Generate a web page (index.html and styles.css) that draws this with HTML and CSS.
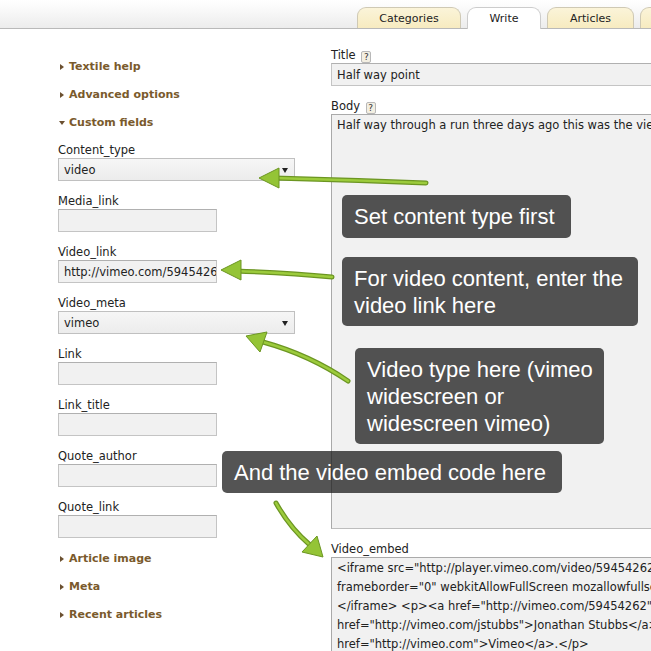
FILE: index.html
```html
<!DOCTYPE html>
<html lang="en">
<head>
<meta charset="utf-8">
<title>Write</title>
<link rel="stylesheet" href="styles.css">
</head>
<body>
<div class="page">
  <header class="topbar">
    <nav class="tabs">
      <span class="tab tab-cat">Categories</span>
      <span class="tab tab-write active">Write</span>
      <span class="tab tab-art">Articles</span>
      <span class="tab tab-more">Images</span>
    </nav>
  </header>

  <main class="layout">
    <aside class="side">
      <div class="toggle closed">Textile help</div>
      <div class="toggle closed">Advanced options</div>
      <div class="toggle open">Custom fields</div>

      <div class="fields">
        <div class="field">
          <label class="lbl">Content_type</label>
          <div class="select">video</div>
        </div>
        <div class="field">
          <label class="lbl">Media_link</label>
          <div class="input"></div>
        </div>
        <div class="field">
          <label class="lbl">Video_link</label>
          <div class="input">http://vimeo.com/59454262</div>
        </div>
        <div class="field">
          <label class="lbl">Video_meta</label>
          <div class="select">vimeo</div>
        </div>
        <div class="field">
          <label class="lbl">Link</label>
          <div class="input"></div>
        </div>
        <div class="field">
          <label class="lbl">Link_title</label>
          <div class="input"></div>
        </div>
        <div class="field">
          <label class="lbl">Quote_author</label>
          <div class="input"></div>
        </div>
        <div class="field">
          <label class="lbl">Quote_link</label>
          <div class="input"></div>
        </div>
      </div>

      <div class="toggle closed">Article image</div>
      <div class="toggle closed">Meta</div>
      <div class="toggle closed">Recent articles</div>
    </aside>

    <section class="main">
      <label class="lbl">Title <span class="help">?</span></label>
      <div class="input wide">Half way point</div>

      <label class="lbl gap">Body <span class="help">?</span></label>
      <div class="area body-area">Half way through a run three days ago this was the view from the top of the hill.</div>

      <label class="lbl gap">Video_embed</label>
      <div class="area embed-area">&lt;iframe src="http://player.vimeo.com/video/59454262" width="500" height="281"
frameborder="0" webkitAllowFullScreen mozallowfullscreen allowFullScreen&gt;
&lt;/iframe&gt; &lt;p&gt;&lt;a href="http://vimeo.com/59454262"&gt;Half way point&lt;/a&gt; from &lt;a
href="http://vimeo.com/jstubbs"&gt;Jonathan Stubbs&lt;/a&gt; on &lt;a
href="http://vimeo.com"&gt;Vimeo&lt;/a&gt;.&lt;/p&gt;</div>
    </section>
  </main>

  <svg class="arrows" width="651" height="651" viewBox="0 0 651 651" aria-hidden="true">
    <g class="arrow">
      <path class="shaft-dark" d="M426 183 Q350 180 274 178"/>
      <path class="shaft" d="M426 183 Q350 180 274 178"/>
      <polygon class="head" points="259,178 279,168 279,188"/>
    </g>
    <g class="arrow">
      <path class="shaft-dark" d="M332 277 Q290 273 236 271"/>
      <path class="shaft" d="M332 277 Q290 273 236 271"/>
      <polygon class="head" points="221,270 241,260 241,280"/>
    </g>
    <g class="arrow">
      <path class="shaft-dark" d="M348 381 Q310 355 263 342"/>
      <path class="shaft" d="M348 381 Q310 355 263 342"/>
      <polygon class="head" points="246,336 267,332 260,352"/>
    </g>
    <g class="arrow">
      <path class="shaft-dark" d="M276 503 Q290 528 310 545"/>
      <path class="shaft" d="M276 503 Q290 528 310 545"/>
      <polygon class="head" points="323,557 302,552 317,536"/>
    </g>
  </svg>

  <div class="callout c1">Set content type first</div>
  <div class="callout c2">For video content, enter the<br>video link here</div>
  <div class="callout c3">Video type here (vimeo<br>widescreen or<br>widescreen vimeo)</div>
  <div class="callout c4">And the video embed code here</div>
</div>
</body>
</html>
```

FILE: styles.css
```css
html, body {
  margin: 0;
  padding: 0;
  overflow: hidden;
  background: #ffffff;
}

.page {
  position: relative;
  width: 651px;
  height: 651px;
  overflow: hidden;
  font-family: "DejaVu Sans", Verdana, sans-serif;
  font-size: 11.5px;
  color: #222;
}

/* ---------- top bar & tabs ---------- */
.topbar {
  height: 28px;
  background: linear-gradient(#ffffff 0%, #fafafa 30%, #ececec 100%);
  border-bottom: 1px solid #b9b9b9;
}

.tabs {
  display: flex;
  align-items: flex-end;
  gap: 6px;
  height: 28px;
  padding-left: 357px;
  width: 600px;
}

.tab {
  box-sizing: border-box;
  height: 21px;
  padding-top: 4px;
  text-align: center;
  color: #222;
  background: linear-gradient(#fbf4d9, #f7ebc0);
  border: 1px solid #cfc9b4;
  border-bottom: none;
  border-radius: 9px 9px 0 0;
  flex: none;
  font-size: 11px;
}

.tab-cat { width: 104px; }
.tab-write { width: 74px; }
.tab-art { width: 87px; }
.tab-more { width: 80px; }

.tab.active {
  background: #ffffff;
  height: 22px;
  margin-bottom: -1px;
  border-color: #cccccc;
}

/* ---------- layout ---------- */
.layout {
  display: grid;
  grid-template-columns: 273px 460px;
  padding-left: 58px;
}

.side {
  padding-top: 31px;
}

.toggle {
  position: relative;
  height: 14px;
  line-height: 14px;
  margin: 0 0 14px 11px;
  font-weight: bold;
  font-size: 11px;
  color: #7a5a2c;
}

.toggle.open {
  margin-bottom: 13px;
}

.toggle::before {
  content: "";
  position: absolute;
  top: 4px;
  left: -9px;
  width: 0;
  height: 0;
}

.toggle.closed::before {
  border-left: 4px solid #6b5030;
  border-top: 3.5px solid transparent;
  border-bottom: 3.5px solid transparent;
}

.toggle.open::before {
  top: 5px;
  left: -10px;
  border-top: 4px solid #6b5030;
  border-left: 3.5px solid transparent;
  border-right: 3.5px solid transparent;
}

.fields {
  display: flex;
  flex-direction: column;
  gap: 13px;
  margin-bottom: 14px;
}

.field {
  display: flex;
  flex-direction: column;
  align-items: flex-start;
  gap: 1px;
}

.lbl {
  display: block;
  height: 14px;
  line-height: 15px;
  color: #222;
}

.input, .select {
  box-sizing: border-box;
  height: 23px;
  line-height: 22px;
  padding: 0 5px;
  background: #f1f1f1;
  border: 1px solid #c4c4c4;
  border-top-color: #b0b0b0;
  color: #222;
  white-space: nowrap;
  overflow: hidden;
}

.input { width: 159px; }

.select {
  position: relative;
  width: 237px;
  background: linear-gradient(#f6f6f6, #ececec);
  border-color: #c0c0c0;
}

.select::after {
  content: "";
  position: absolute;
  right: 6px;
  top: 9px;
  border-top: 5px solid #222;
  border-left: 3.5px solid transparent;
  border-right: 3.5px solid transparent;
}

/* ---------- main column ---------- */
.main {
  padding-top: 19px;
}

.main .lbl {
  margin-bottom: 1px;
}

.main .lbl.gap {
  margin-top: 13px;
}

.help {
  display: inline-block;
  box-sizing: border-box;
  width: 10px;
  height: 12px;
  margin-left: 2px;
  line-height: 10px;
  font-size: 9px;
  text-align: center;
  vertical-align: -1px;
  color: #333;
  background: #f3efe2;
  border: 1px solid #b8b8b8;
  border-radius: 2px;
}

.input.wide {
  width: 460px;
}

.area {
  box-sizing: border-box;
  width: 460px;
  padding: 1px 5px;
  line-height: 19px;
  background: #f1f1f1;
  border: 1px solid #bdbdbd;
  border-left-color: #a9a9a9;
  border-top-color: #aaaaaa;
  white-space: pre;
  overflow: hidden;
  color: #222;
}

.body-area {
  height: 415px;
  line-height: 21px;
  padding-top: 0;
}

.embed-area {
  height: 110px;
  line-height: 19px;
}

/* ---------- annotations ---------- */
.arrows {
  position: absolute;
  left: 0;
  top: 0;
  pointer-events: none;
}

.shaft-dark {
  fill: none;
  stroke: #6c9622;
  stroke-width: 5;
  stroke-linecap: round;
}

.shaft {
  fill: none;
  stroke: #9ccb3c;
  stroke-width: 2.5;
  stroke-linecap: round;
}

.head {
  fill: #94c436;
  stroke: #6c9622;
  stroke-width: 1;
  stroke-linejoin: round;
}

.callout {
  position: absolute;
  box-sizing: border-box;
  padding: 8px 12px;
  font-family: "Liberation Sans", Arial, sans-serif;
  font-size: 22px;
  line-height: 27px;
  color: #ffffff;
  background: rgba(30, 30, 30, 0.76);
  border-radius: 5px;
  white-space: nowrap;
  overflow: hidden;
}

.c1 { left: 342px; top: 195px; width: 229px; height: 43px; }
.c2 { left: 342px; top: 257px; width: 296px; height: 69px; }
.c3 { left: 355px; top: 348px; width: 249px; height: 96px; }
.c4 { left: 222px; top: 451px; width: 340px; height: 42px; }
```
